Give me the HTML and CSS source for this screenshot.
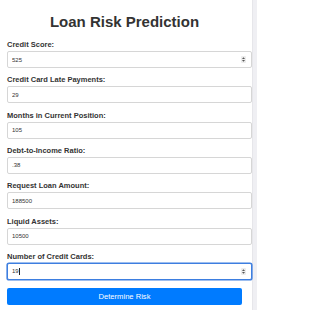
FILE: index.html
```html
<!DOCTYPE html>
<html lang="en">
<head>
<meta charset="utf-8">
<title>Loan Risk Prediction</title>
<link rel="stylesheet" href="styles.css">
</head>
<body>
<div class="page">
  <main class="container">
    <h1 class="title">Loan Risk Prediction</h1>
    <form class="form">
      <div class="group">
        <label class="label" for="score">Credit Score:</label>
        <div class="field">
          <input class="input" id="score" type="text" value="525">
          <span class="spin"><svg width="5" height="7" viewBox="0 0 5 7"><rect x="0" y="0" width="5" height="7" rx="1" fill="#ececec"/><path d="M1 3L2.5 1.2L4 3Z M1 4L2.5 5.8L4 4Z" fill="#555"/></svg></span>
        </div>
      </div>
      <div class="group">
        <label class="label" for="late">Credit Card Late Payments:</label>
        <div class="field"><input class="input" id="late" type="text" value="29"></div>
      </div>
      <div class="group">
        <label class="label" for="months">Months in Current Position:</label>
        <div class="field"><input class="input" id="months" type="text" value="105"></div>
      </div>
      <div class="group">
        <label class="label" for="dti">Debt-to-Income Ratio:</label>
        <div class="field"><input class="input" id="dti" type="text" value=".38"></div>
      </div>
      <div class="group">
        <label class="label" for="loan">Request Loan Amount:</label>
        <div class="field"><input class="input" id="loan" type="text" value="188500"></div>
      </div>
      <div class="group">
        <label class="label" for="assets">Liquid Assets:</label>
        <div class="field"><input class="input" id="assets" type="text" value="10500"></div>
      </div>
      <div class="group">
        <label class="label" for="cards">Number of Credit Cards:</label>
        <div class="field">
          <input class="input input-focused" id="cards" type="text" value="19">
          <span class="caret"></span>
          <span class="spin"><svg width="5" height="7" viewBox="0 0 5 7"><rect x="0" y="0" width="5" height="7" rx="1" fill="#ececec"/><path d="M1 3L2.5 1.2L4 3Z M1 4L2.5 5.8L4 4Z" fill="#555"/></svg></span>
        </div>
      </div>
      <button class="btn" type="button">Determine Risk</button>
    </form>
  </main>
  <div class="scroll-strip"></div>
</div>
</body>
</html>
```

FILE: styles.css
```css
* {
  box-sizing: border-box;
}

html, body {
  margin: 0;
  padding: 0;
  background: #ffffff;
}

body {
  font-family: "Liberation Sans", Arial, sans-serif;
  color: #333333;
}

.page {
  display: flex;
  width: 257px;
  height: 310px;
  overflow: hidden;
}

.container {
  flex: 1;
  padding: 13px 10px 0 7px;
}

.scroll-strip {
  width: 5px;
  flex: none;
  background: #efeff3;
  border-left: 1px solid #e6e6ea;
}

.title {
  margin: 0 0 10px;
  font-size: 15px;
  line-height: 17px;
  font-weight: bold;
  text-align: center;
  color: #333333;
}

.form {
  display: flex;
  flex-direction: column;
}

.group {
  display: flex;
  flex-direction: column;
  margin-bottom: 7.33px;
}

.label {
  display: block;
  font-size: 7.5px;
  line-height: 9px;
  font-weight: bold;
  color: #333333;
  margin-bottom: 2px;
}

.field {
  position: relative;
  width: calc(100% + 10px);
}

.input {
  display: block;
  width: 100%;
  height: 17px;
  margin: 0;
  padding: 0 4px;
  border: 1px solid #d6d6d6;
  border-radius: 2px;
  font-family: "Liberation Sans", Arial, sans-serif;
  font-size: 6px;
  color: #333333;
  background: #ffffff;
  outline: none;
}

.input-focused {
  border-color: #3d7ee0;
  box-shadow: 0 0 0 0.6px #3d7ee0;
}

.caret {
  position: absolute;
  left: 11.7px;
  top: 5px;
  width: 0.7px;
  height: 7px;
  background: #222222;
}

.spin {
  position: absolute;
  right: 6px;
  top: 5px;
  width: 5px;
  height: 7px;
  display: flex;
}

.btn {
  margin-top: 0.67px;
  height: 17px;
  width: 100%;
  border: none;
  border-radius: 2px;
  background: #007bff;
  color: #ffffff;
  font-family: "Liberation Sans", Arial, sans-serif;
  font-size: 7.6px;
  padding: 0;
}
```
